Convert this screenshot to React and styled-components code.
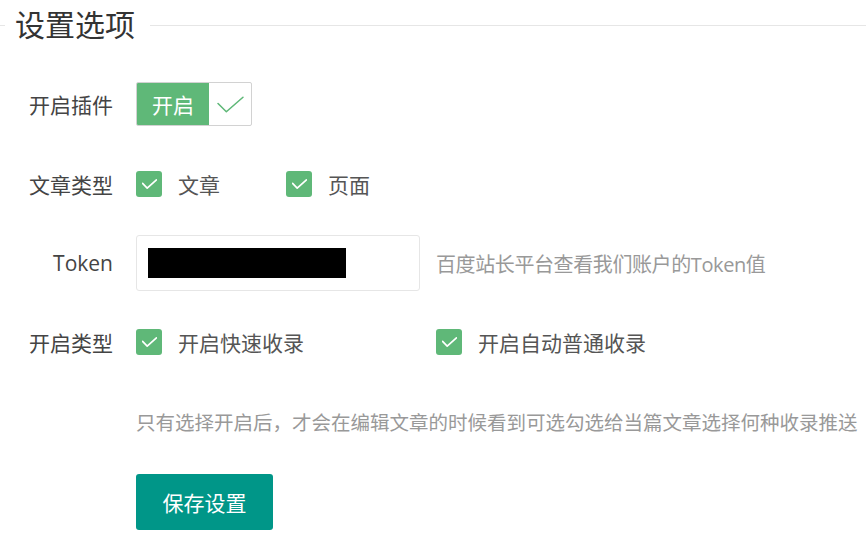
import React from 'react';
import styled, { createGlobalStyle } from 'styled-components';

const GlobalStyle = createGlobalStyle`
  html, body {
    margin: 0;
    padding: 0;
    background: #fff;
  }
  body {
    font-family: "Open Sans", "Noto Sans CJK SC", sans-serif;
    color: #444;
  }
`;

const green = '#5fb878';

const Page = styled.div`
  width: 866px;
  height: 543px;
  overflow: hidden;
`;

const Legend = styled.div`
  display: flex;
  align-items: center;
  height: 50px;
  margin-bottom: 26px;

  &::before {
    content: '';
    width: 5px;
    border-top: 1px solid #e6e6e6;
  }

  &::after {
    content: '';
    flex: 1;
    border-top: 1px solid #e6e6e6;
  }
`;

const LegendText = styled.span`
  padding: 0 15px 0 10px;
  font-size: 30px;
  color: #333;
  line-height: 50px;
`;

const Row = styled.div`
  display: flex;
  align-items: center;
  min-height: 56px;
  margin-bottom: ${(p) => p.gap || 24}px;
`;

const Label = styled.label`
  width: 136px;
  box-sizing: border-box;
  padding-right: 23px;
  text-align: right;
  font-size: 21px;
  color: #444;
  flex-shrink: 0;
`;

const Switch = styled.div`
  display: flex;
  width: 116px;
  height: 44px;
  box-sizing: border-box;
  border: 1px solid #d2d2d2;
  border-radius: 2px;
  overflow: hidden;
`;

const SwitchOn = styled.span`
  width: 72px;
  background: ${green};
  color: #fff;
  font-size: 21px;
  display: flex;
  align-items: center;
  justify-content: center;
`;

const SwitchMark = styled.span`
  flex: 1;
  display: flex;
  align-items: center;
  justify-content: center;
`;

const CheckItem = styled.div`
  display: flex;
  align-items: center;
  width: ${(p) => p.width}px;
  font-size: 21px;
  color: #555;
`;

const Box = styled.span`
  width: 26px;
  height: 26px;
  border-radius: 3px;
  background: ${green};
  display: flex;
  align-items: center;
  justify-content: center;
  margin-right: 16px;
  flex-shrink: 0;
`;

const Input = styled.div`
  width: 284px;
  height: 56px;
  box-sizing: border-box;
  border: 1px solid #e6e6e6;
  border-radius: 3px;
  padding-left: 11px;
  display: flex;
  align-items: center;
`;

const Masked = styled.span`
  width: 198px;
  height: 30px;
  background: #000;
`;

const Hint = styled.span`
  margin-left: 16px;
  font-size: 20px;
  letter-spacing: -0.4px;
  color: #999;
  white-space: nowrap;
`;

const Note = styled.div`
  padding-left: 136px;
  font-size: 19.5px;
  color: #999;
  white-space: nowrap;
  height: 46px;
  line-height: 46px;
  margin-bottom: 28px;
`;

const Button = styled.button`
  margin-left: 136px;
  width: 137px;
  height: 56px;
  border: none;
  border-radius: 3px;
  background: #009688;
  color: #fff;
  font-family: inherit;
  font-size: 21px;
  cursor: pointer;
`;

const Tick = ({ color, w, h, sw }) => (
  <svg width={w} height={h} viewBox="0 0 26 16" fill="none">
    <polyline points="1,7 9,15 25,1" stroke={color} strokeWidth={sw} strokeLinecap="round" strokeLinejoin="round" />
  </svg>
);

function Check({ width, children }) {
  return (
    <CheckItem width={width}>
      <Box>
        <Tick color="#fff" w={15} h={10} sw={3} />
      </Box>
      {children}
    </CheckItem>
  );
}

export default function App() {
  return (
    <Page>
      <GlobalStyle />
      <Legend>
        <LegendText>设置选项</LegendText>
      </Legend>

      <Row>
        <Label>开启插件</Label>
        <Switch>
          <SwitchOn>开启</SwitchOn>
          <SwitchMark>
            <Tick color={green} w={27} h={17} sw={1.5} />
          </SwitchMark>
        </Switch>
      </Row>

      <Row gap={23}>
        <Label>文章类型</Label>
        <Check width={150}>文章</Check>
        <Check width={150}>页面</Check>
      </Row>

      <Row gap={23}>
        <Label>Token</Label>
        <Input>
          <Masked />
        </Input>
        <Hint>百度站长平台查看我们账户的Token值</Hint>
      </Row>

      <Row gap={30}>
        <Label>开启类型</Label>
        <Check width={300}>开启快速收录</Check>
        <Check width={300}>开启自动普通收录</Check>
      </Row>

      <Note>只有选择开启后，才会在编辑文章的时候看到可选勾选给当篇文章选择何种收录推送</Note>

      <Button>保存设置</Button>
    </Page>
  );
}
